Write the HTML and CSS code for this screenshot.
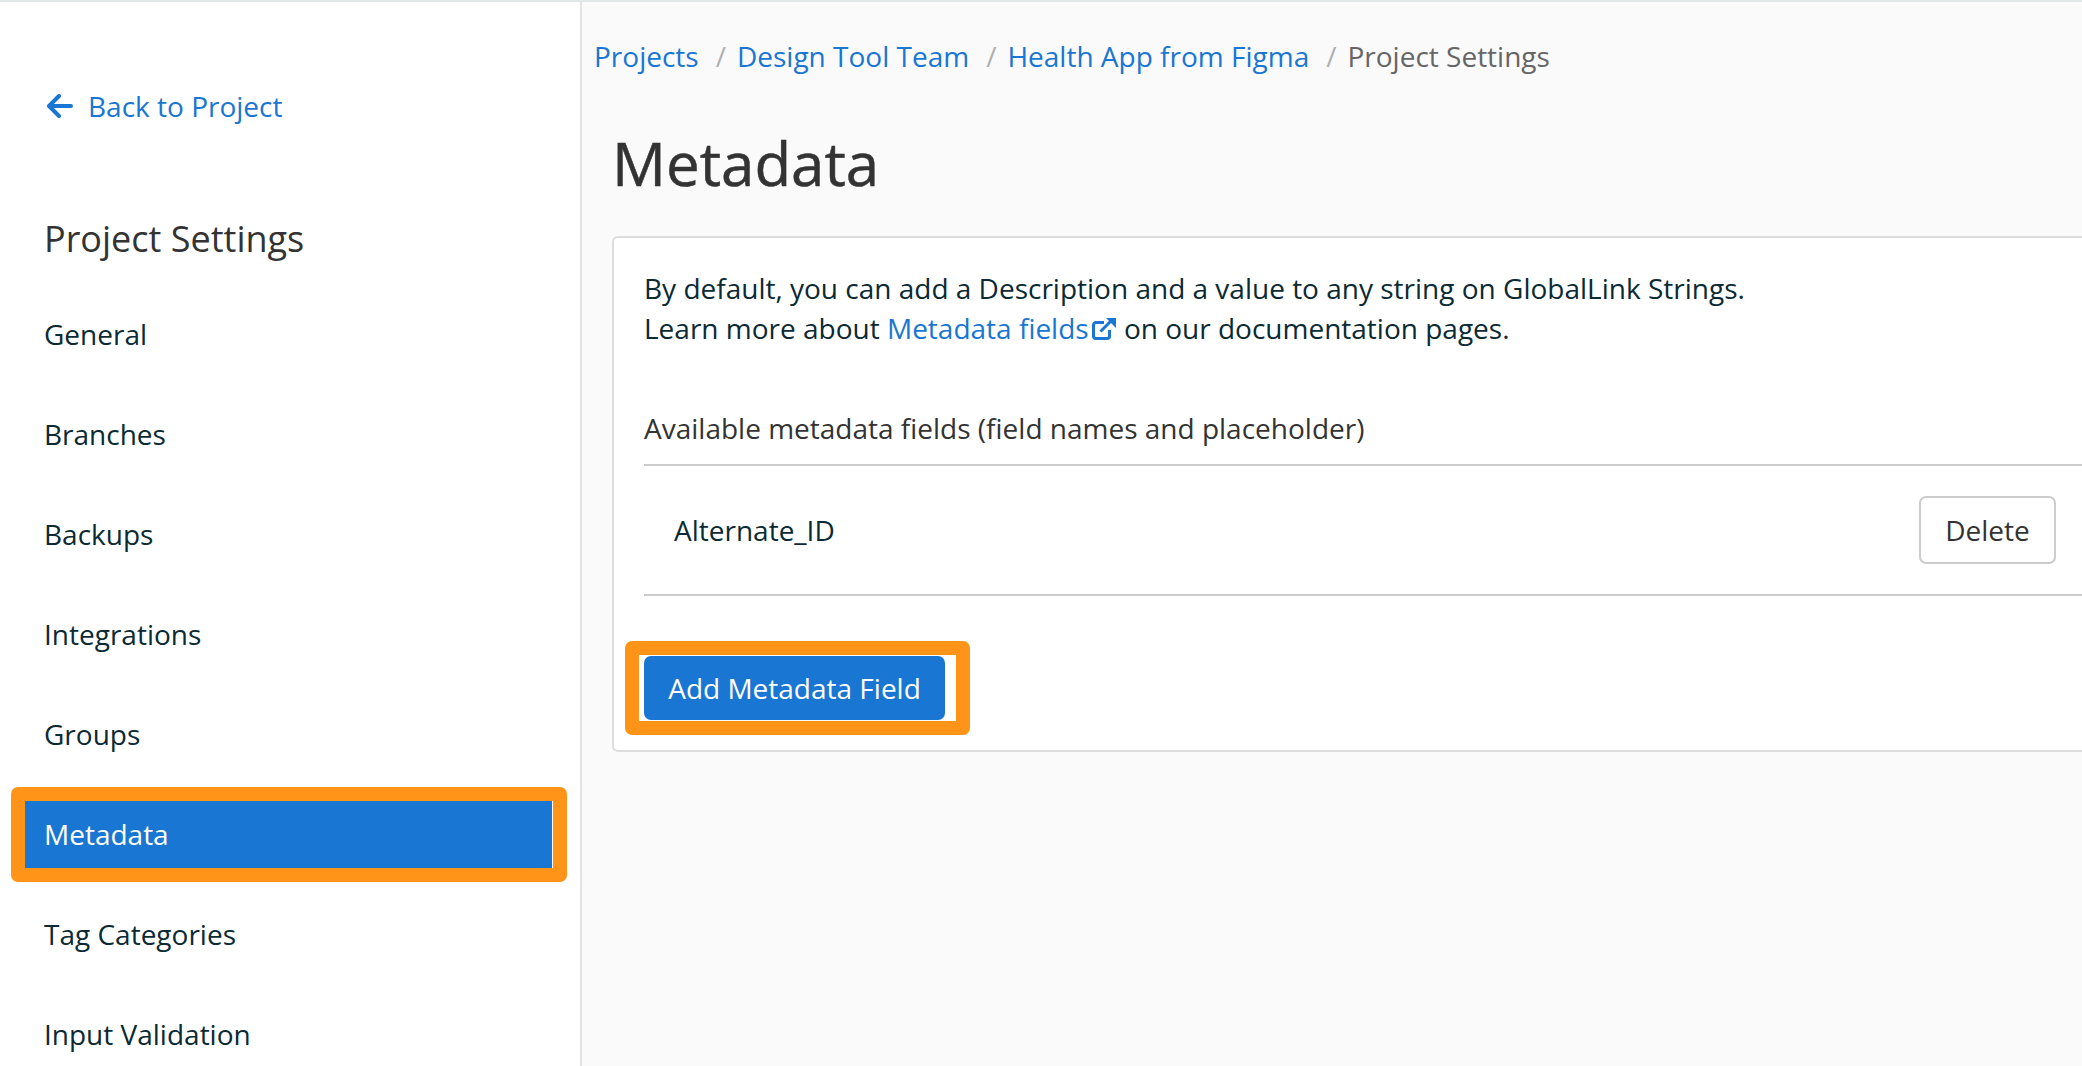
FILE: index.html
```html
<!DOCTYPE html>
<html lang="en">
<head>
<meta charset="utf-8">
<title>Project Settings - Metadata</title>
<link rel="stylesheet" href="styles.css">
</head>
<body>
<div class="app">
  <aside class="sidebar">
    <a class="back" href="#">
      <svg class="back-icon" viewBox="0 0 26 24" width="26" height="24" aria-hidden="true"><path d="M2 12H24M12 2 2 12 12 22" fill="none" stroke="currentColor" stroke-width="4" stroke-linecap="round" stroke-linejoin="round"/></svg>
      <span>Back to Project</span>
    </a>
    <h2 class="side-title">Project Settings</h2>
    <nav class="nav">
      <a class="nav-item" href="#">General</a>
      <a class="nav-item" href="#">Branches</a>
      <a class="nav-item" href="#">Backups</a>
      <a class="nav-item" href="#">Integrations</a>
      <a class="nav-item" href="#">Groups</a>
      <div class="mark mark-nav"><a class="nav-item active" href="#">Metadata</a></div>
      <a class="nav-item" href="#">Tag Categories</a>
      <a class="nav-item" href="#">Input Validation</a>
    </nav>
  </aside>
  <main class="main">
    <div class="crumbs">
      <a href="#">Projects</a><span class="sep">/</span>
      <a href="#">Design Tool Team</a><span class="sep">/</span>
      <a href="#">Health App from Figma</a><span class="sep">/</span>
      <span class="current">Project Settings</span>
    </div>
    <h1 class="title">Metadata</h1>
    <section class="card">
      <p class="intro">By default, you can add a Description and a value to any string on GlobalLink Strings.<br>Learn more about <a href="#">Metadata fields<svg class="ext" viewBox="0 0 24 22" width="24" height="22" aria-hidden="true"><path d="M12 4.500H4A2.500 2.500 0 0 0 1.500 7V18A2.500 2.500 0 0 0 4 20.500H15A2.500 2.500 0 0 0 17.500 18V12" fill="none" stroke="currentColor" stroke-width="3"/><path d="M8.500 13.500 19 3" fill="none" stroke="currentColor" stroke-width="3"/><path d="M14 0H24V10Z" fill="currentColor"/></svg></a> on our documentation pages.</p>
      <div class="fields-head">Available metadata fields (field names and placeholder)</div>
      <div class="field-row">
        <span class="field-name">Alternate_ID</span>
        <button class="btn-delete" type="button">Delete</button>
      </div>
      <div class="mark mark-btn"><button class="btn-add" type="button">Add Metadata Field</button></div>
    </section>
  </main>
</div>
</body>
</html>
```
FILE: styles.css
```css
* { box-sizing: border-box; }
html, body { margin: 0; height: 100%; overflow: hidden; }
body {
  font-family: "Open Sans", "Noto Sans", sans-serif;
  font-size: 28px;
  color: #0b2a33;
  background: #fff;
}
a { color: #1976d2; text-decoration: none; }
.app {
  display: flex;
  height: 1066px;
  border-top: 2px solid #e1e6e6;
}
.sidebar {
  flex: 0 0 582px;
  background: #fff;
  border-right: 2px solid #e4e4e4;
  padding-top: 82px;
  overflow: hidden;
}
.back {
  display: flex;
  align-items: center;
  gap: 15px;
  height: 44px;
  margin-left: 47px;
}
.back-icon { flex: none; }
.side-title {
  margin: 86px 0 0 44px;
  font-size: 36px;
  line-height: 50px;
  font-weight: 400;
  color: #333;
}
.nav { display: flex; flex-direction: column; gap: 33px; margin: 37px 0 0 25px; }
.nav-item {
  display: flex;
  align-items: center;
  height: 67px;
  padding: 0 0 2px 19px;
  color: #0b2a33;
}
.mark {
  border: 14px solid #ff9419;
  border-radius: 7px;
  background: #fff;
}
.mark-nav { margin: -14px 13px -14px -14px; }
.nav-item.active {
  margin-right: 1px;
  background: #1976d2;
  color: #fff;
}
.main {
  flex: 1;
  min-width: 0;
  overflow: hidden;
  background: #fafafa;
  padding: 32px 0 0 12px;
}
.crumbs { display: flex; align-items: center; height: 44px; white-space: nowrap; }
.sep { margin: 0 11px 0 17px; color: #b0b0b0; }
.current { color: #666; }
.title {
  margin: 43px 0 0 18px;
  font-size: 60px;
  line-height: 84px;
  font-weight: 400;
  color: #333;
  -webkit-text-stroke: 0.5px #333;
}
.card {
  width: 1600px;
  height: 516px;
  margin: 31px 0 0 18px;
  padding: 30px 0 0 30px;
  background: #fff;
  border: 2px solid #ddd;
  border-radius: 6px;
}
.intro { margin: 0; line-height: 40px; }
.ext { vertical-align: -1px; margin-left: 3px; margin-right: 1px; }
.fields-head {
  margin-top: 62px;
  height: 56px;
  line-height: 36px;
  color: #333;
  border-bottom: 2px solid #ccc;
}
.field-row {
  display: flex;
  align-items: center;
  justify-content: space-between;
  width: 1600px;
  height: 130px;
  padding: 0 188px 0 30px;
  border-bottom: 2px solid #ccc;
}
.btn-delete {
  font: inherit;
  color: #333;
  width: 137px;
  height: 68px;
  padding: 0;
  background: #fff;
  border: 2px solid #ccc;
  border-radius: 7px;
}
.mark-btn {
  display: inline-block;
  margin: 45px 0 0 -19px;
  padding: 1px 11px 1px 5px;
}
.btn-add {
  display: block;
  font: inherit;
  color: #fff;
  width: 301px;
  height: 64px;
  padding: 0;
  background: #1976d2;
  border: 0;
  border-radius: 7px;
}
```
